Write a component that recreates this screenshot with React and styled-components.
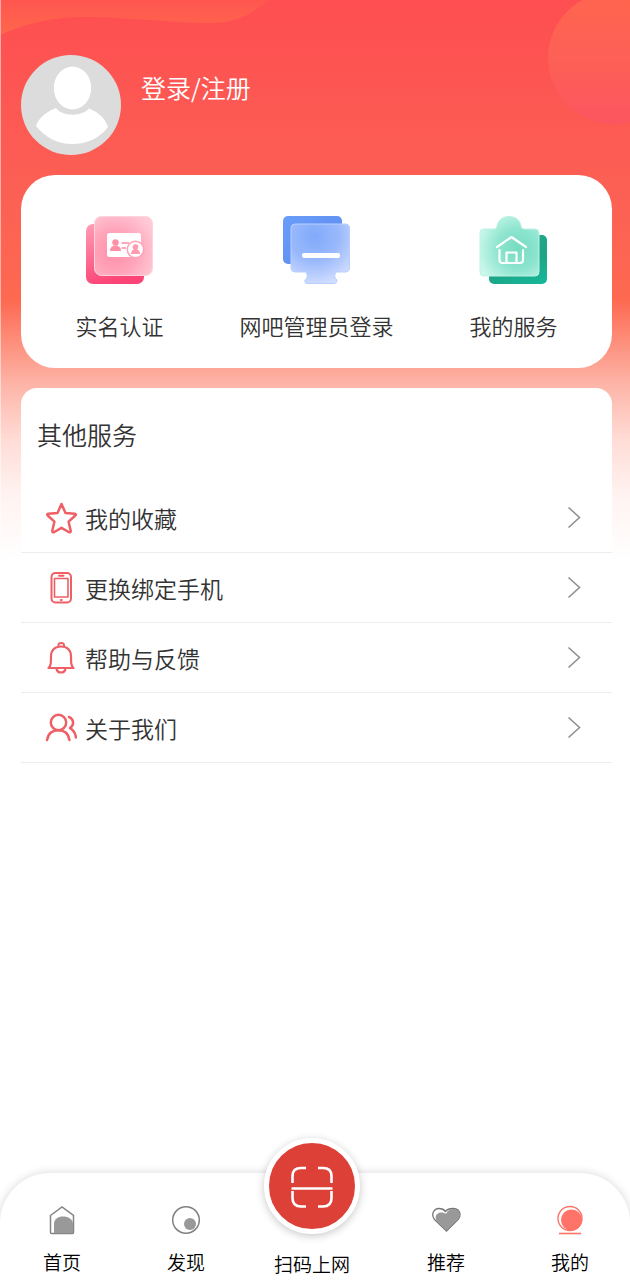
import React from 'react';
import styled, { createGlobalStyle } from 'styled-components';

const shortcuts = [
  { label: '实名认证', Icon: IdCardIcon },
  { label: '网吧管理员登录', Icon: MonitorIcon },
  { label: '我的服务', Icon: ServiceIcon },
];

const services = [
  { label: '我的收藏', Icon: StarIcon },
  { label: '更换绑定手机', Icon: PhoneIcon },
  { label: '帮助与反馈', Icon: BellIcon },
  { label: '关于我们', Icon: PeopleIcon },
];

const App = () => {
  return (
    <>
      <GlobalStyle />
      <Page>
        <Backdrop />
        <Profile>
          <Avatar />
          <LoginLink href='#login'>登录/注册</LoginLink>
        </Profile>
        <Main>
          <ShortcutCard>
            {shortcuts.map(({ label, Icon }) => (
              <Shortcut key={label} type='button'>
                <Icon />
                <span>{label}</span>
              </Shortcut>
            ))}
          </ShortcutCard>
          <ServiceCard>
            <ServiceTitle>其他服务</ServiceTitle>
            <ServiceList>
              {services.map(({ label, Icon }) => (
                <li key={label}>
                  <ServiceRow type='button'>
                    <Icon />
                    <span>{label}</span>
                    <Chevron />
                  </ServiceRow>
                </li>
              ))}
            </ServiceList>
          </ServiceCard>
        </Main>
        <TabBar>
          <Tab href='#home'>
            <HomeIcon />
            <span>首页</span>
          </Tab>
          <Tab href='#discover'>
            <DiscoverIcon />
            <span>发现</span>
          </Tab>
          <ScanTab type='button'>
            <ScanCircle>
              <ScanIcon />
            </ScanCircle>
            <span>扫码上网</span>
          </ScanTab>
          <Tab href='#recommend'>
            <HeartIcon />
            <span>推荐</span>
          </Tab>
          <Tab href='#mine' aria-current='page'>
            <MineIcon />
            <span>我的</span>
          </Tab>
        </TabBar>
      </Page>
    </>
  );
};

function Backdrop() {
  return (
    <Decoration aria-hidden='true'>
      <Wave width='272' height='36' viewBox='0 0 272 36'>
        <defs>
          <linearGradient id='wave' x1='0' y1='0' x2='0' y2='1'>
            <stop offset='0' stopColor='#ff5650' />
            <stop offset='1' stopColor='#ff674b' />
          </linearGradient>
        </defs>
        <path
          d='M0 0H270C254 11 240 23 212 23C168 23 132 17 84 17C52 17 24 24 0 35Z'
          fill='url(#wave)'
        />
      </Wave>
      <Bubble />
    </Decoration>
  );
}

function Avatar() {
  return (
    <svg width='100' height='100' viewBox='0 0 100 100' role='img' aria-label='头像'>
      <circle cx='50' cy='50' r='50' fill='#dcdcdc' />
      <ellipse cx='51.500' cy='33' rx='18.700' ry='21.500' fill='#fff' />
      <path
        d='M35 53C41 61.500 61 62 68 53.500C77 57 84 63 87 72C79 83 66 89 51 89C36 89 24 82 15 71C18 62 27 56 35 53Z'
        fill='#fff'
      />
    </svg>
  );
}

function IdCardIcon() {
  return (
    <svg width='72' height='72' viewBox='0 0 72 72' aria-hidden='true'>
      <defs>
        <linearGradient id='idBack' x1='0' y1='0' x2='0.300' y2='1'>
          <stop offset='0' stopColor='#ff9db4' />
          <stop offset='1' stopColor='#fb4577' />
        </linearGradient>
        <radialGradient id='idFront' cx='0.350' cy='0.600' r='0.750'>
          <stop offset='0' stopColor='#ff8faa' />
          <stop offset='0.500' stopColor='#ffa5ba' />
          <stop offset='1' stopColor='#ffc9d5' />
        </radialGradient>
      </defs>
      <rect x='2' y='10' width='58' height='60' rx='7' fill='url(#idBack)' />
      <rect x='10.500' y='2.500' width='58' height='59' rx='7' fill='url(#idFront)' stroke='#ffd3dd' />
      <rect x='23' y='19' width='34' height='24' rx='2.500' fill='#fff' />
      <circle cx='31.500' cy='28.500' r='3.200' fill='#ff8fa7' />
      <path d='M26 37C26 33 29 31.500 31.500 31.500C34 31.500 37 33 37 37Z' fill='#ff8fa7' />
      <path d='M37.500 29H45M37.500 34H42' stroke='#ff8fa7' strokeWidth='1.600' />
      <circle cx='51.500' cy='35.500' r='9' fill='#ffa0b5' />
      <circle cx='51.500' cy='35.500' r='7.500' fill='#fff' />
      <circle cx='51.500' cy='33' r='2.800' fill='#ff9ab0' />
      <path d='M47 40C47 36.500 49.500 35 51.500 35C53.500 35 56 36.500 56 40Z' fill='#ff9ab0' />
    </svg>
  );
}

function MonitorIcon() {
  return (
    <svg width='72' height='72' viewBox='0 0 72 72' aria-hidden='true'>
      <defs>
        <linearGradient id='pcBack' x1='0' y1='0' x2='1' y2='1'>
          <stop offset='0' stopColor='#6a9efb' />
          <stop offset='1' stopColor='#5b87ea' />
        </linearGradient>
        <radialGradient id='pcFront' cx='0.400' cy='0.200' r='0.850'>
          <stop offset='0' stopColor='#80aafb' />
          <stop offset='0.500' stopColor='#9ab9fb' />
          <stop offset='1' stopColor='#d3dfff' />
        </radialGradient>
      </defs>
      <rect x='2' y='2' width='59' height='48' rx='5' fill='url(#pcBack)' />
      <path
        d='M14 10H64Q68.500 10 68.500 14V54Q68.500 58 64 58H55Q52 63 56 66Q56 69.500 53 69.500H26Q23 69.500 24 66Q28 63 25 58H14Q10 58 10 54V14Q10 10 14 10Z'
        fill='url(#pcFront)'
        stroke='#b9ceff'
      />
      <rect x='21' y='39' width='38' height='5' rx='2' fill='#fff' />
    </svg>
  );
}

function ServiceIcon() {
  return (
    <svg width='72' height='72' viewBox='0 0 72 72' aria-hidden='true'>
      <defs>
        <linearGradient id='svBack' x1='0.500' y1='0' x2='1' y2='1'>
          <stop offset='0' stopColor='#22a88b' />
          <stop offset='0.500' stopColor='#1da486' />
          <stop offset='1' stopColor='#16b99a' />
        </linearGradient>
        <radialGradient id='svFront' cx='0.650' cy='0.550' r='0.700'>
          <stop offset='0' stopColor='#74dcc0' />
          <stop offset='0.500' stopColor='#8ee5cf' />
          <stop offset='1' stopColor='#c9f7ea' />
        </radialGradient>
      </defs>
      <rect x='11' y='21' width='58' height='49' rx='5' fill='url(#svBack)' />
      <path
        d='M6 15H16Q19 15 19 12C20 6 25 2.500 31 2.500C38 2.500 42 6 43 12Q43 15 46 15H57Q61 15 61 19V58Q61 62 57 62H6Q2 62 2 58V19Q2 15 6 15Z'
        fill='url(#svFront)'
        stroke='#bff2e3'
      />
      <g fill='none' stroke='#fff' strokeWidth='2.200' strokeLinecap='round' strokeLinejoin='round'>
        <path d='M19 33L33.500 23L48 33' />
        <path d='M21.500 36V46Q21.500 49 24.500 49H42Q45 49 45 46V36' />
        <path d='M28.500 49V38.500H38.500V49' />
      </g>
    </svg>
  );
}

function StarIcon() {
  return (
    <LineIcon viewBox='0 0 32 32' aria-hidden='true'>
      <path
        strokeWidth='2.500'
        d='M16.500 2L20.500 10.900L29.800 11.800Q31.500 12.200 30.300 13.500L23.600 19.700L25.700 28.700Q25.800 31 23.700 30L16.500 25.800L9.300 30Q7.200 31 7.300 28.700L9.400 19.700L2.700 13.500Q1.500 12.200 3.200 11.800L12.500 10.900Z'
      />
    </LineIcon>
  );
}

function PhoneIcon() {
  return (
    <LineIcon viewBox='0 0 32 32' aria-hidden='true'>
      <rect x='6.500' y='1' width='19.500' height='29.500' rx='4' strokeWidth='2' />
      <rect x='9.500' y='6.500' width='13.500' height='18.500' strokeWidth='1.600' />
      <path d='M14 3.800H18.500M15.800 28H16.700' strokeWidth='2' />
    </LineIcon>
  );
}

function BellIcon() {
  return (
    <LineIcon viewBox='0 0 32 32' aria-hidden='true'>
      <path d='M13.500 4.500V3Q13.500 1 16.200 1T19 3V4.500' strokeWidth='2' />
      <path d='M3.500 26C6 23.500 6 21 6 14.500C6 8 10 4.500 16 4.500S26 8 26 14.500C26 21 26 23.500 28.500 26Z' strokeWidth='2.200' />
      <path d='M11.500 26.500Q12 30.500 16 30.500T20.500 26.500' strokeWidth='2.200' />
    </LineIcon>
  );
}

function PeopleIcon() {
  return (
    <LineIcon viewBox='0 0 32 32' aria-hidden='true'>
      <circle cx='13.500' cy='10.500' r='7.700' strokeWidth='2.500' />
      <path d='M2 28C3 22 6.500 18.200 13.500 18.200S23.500 22 24.500 28' strokeWidth='2.500' />
      <path d='M24 5C29.500 7.500 29 13.500 25 16C28 18 30.500 21.500 31 25.500' strokeWidth='2.500' />
    </LineIcon>
  );
}

function Chevron() {
  return (
    <svg width='14' height='24' viewBox='0 0 14 24' fill='none' stroke='#909090' strokeWidth='1.600' aria-hidden='true'>
      <path d='M1.500 1.500L12.500 11.500L1.500 21.500' />
    </svg>
  );
}

function HomeIcon() {
  return (
    <TabIcon viewBox='0 0 30 30' aria-hidden='true'>
      <path d='M3.500 10.500L15 2L26.500 10.500V27.500Q26.500 28.500 25.500 28.500H4.500Q3.500 28.500 3.500 27.500Z' fill='none' stroke='#858585' strokeWidth='1.500' />
      <path d='M7 28V19C7 14 11 11.500 16 11.500S26 14 26 19V28Z' fill='#999' />
    </TabIcon>
  );
}

function DiscoverIcon() {
  return (
    <TabIcon viewBox='0 0 30 30' aria-hidden='true'>
      <circle cx='15' cy='15' r='13.300' fill='none' stroke='#808080' strokeWidth='1.500' />
      <circle cx='19' cy='19' r='6' fill='#999' />
    </TabIcon>
  );
}

function HeartIcon() {
  return (
    <TabIcon viewBox='0 0 30 30' aria-hidden='true'>
      <path d='M15.500 26L3.500 14.500C-0.500 9 3 3.500 8 3.500C11 3.500 13 4.500 14.500 6.500C16 4.500 18.500 3.500 22 3.500C28 3.500 31 9 27.500 14Z' fill='#fff' stroke='#777' strokeWidth='1.300' />
      <path d='M15.500 25.500L6 16.500C3 12.500 5.500 7.500 10 7.500C12 7.500 14 8 15 9C16.500 5.500 19 4 22 4C27.500 4 30.500 9 27 14Z' fill='#999' />
    </TabIcon>
  );
}

function MineIcon() {
  return (
    <TabIcon viewBox='0 0 30 30' aria-hidden='true'>
      <circle cx='15' cy='13.500' r='12' fill='none' stroke='#ff7368' strokeWidth='1.400' />
      <circle cx='16.500' cy='15' r='10.500' fill='#ff7368' />
      <path d='M4 28.500H26' stroke='#ff7368' strokeWidth='1.600' />
    </TabIcon>
  );
}

function ScanIcon() {
  return (
    <svg width='44' height='44' viewBox='0 0 44 44' fill='none' stroke='#fff' strokeWidth='2.600' aria-hidden='true'>
      <path d='M2.500 19V12Q2.500 4 11 4H16M28 4H33Q41.500 4 41.500 12V19M2.500 27V34Q2.500 42.500 11 42.500H16M28 42.500H33Q41.500 42.500 41.500 34V27' />
      <path d='M1.500 24.500H42.500' />
    </svg>
  );
}

const GlobalStyle = createGlobalStyle`
  * {
    box-sizing: border-box;
  }
  body {
    margin: 0;
    background: #fff;
    font-family: 'Noto Sans CJK SC', sans-serif;
    font-weight: 350;
    color: #333;
  }
  button {
    padding: 0;
    border: 0;
    background: none;
    color: inherit;
    font: inherit;
    cursor: pointer;
  }
  a {
    color: inherit;
    text-decoration: none;
  }
  svg {
    display: block;
    flex: none;
  }
`;

const Page = styled.div`
  position: relative;
  isolation: isolate;
  display: flex;
  flex-direction: column;
  min-height: 100vh;
`;

const Decoration = styled.div`
  position: absolute;
  inset: 0 0 auto;
  z-index: -1;
  height: 560px;
  overflow: hidden;
  background: linear-gradient(
    #fe4e51 0,
    #fc5f54 180px,
    #fd6951 300px,
    #fd9482 348px,
    #fdb5a8 385px,
    #ffdcd6 440px,
    #fff3f1 495px,
    #fff 560px
  );
  border-left: 1px solid rgba(255, 255, 255, 0.5);
`;

const Wave = styled.svg`
  position: absolute;
  top: 0;
  left: -1px;
`;

const Bubble = styled.div`
  position: absolute;
  top: -8px;
  right: -50px;
  width: 132px;
  height: 132px;
  border-radius: 50%;
  background: linear-gradient(#ff654e, #fd6056 50%, #fc5560);
`;

const Profile = styled.header`
  display: flex;
  gap: 20px;
  padding: 55px 21px 20px;
`;

const LoginLink = styled.a`
  align-self: flex-start;
  margin-top: 14px;
  color: #fff;
  font-size: 25px;
  line-height: 36px;
`;

const Main = styled.main`
  display: flex;
  flex-direction: column;
  gap: 20px;
  padding: 0 18px 0 21px;
`;

const ShortcutCard = styled.section`
  display: grid;
  grid-template-columns: repeat(3, 1fr);
  padding: 39px 0 26px;
  border-radius: 34px;
  background: #fff;
`;

const Shortcut = styled.button`
  display: flex;
  flex-direction: column;
  align-items: center;
  gap: 22px;
  font-size: 22px;
  line-height: 34px;
  white-space: nowrap;
`;

const ServiceCard = styled.section`
  border-radius: 16px;
  background: #fff;
`;

const ServiceTitle = styled.h2`
  margin: 0;
  padding: 28px 16px 31px;
  font-size: 25px;
  font-weight: inherit;
  line-height: 36px;
`;

const ServiceList = styled.ul`
  margin: 0;
  padding: 0;
  list-style: none;
`;

const ServiceRow = styled.button`
  display: flex;
  align-items: center;
  gap: 8px;
  width: 100%;
  height: 70px;
  padding: 0 31px 0 24px;
  border-bottom: 1px solid #ededed;
  font-size: 23px;
  span {
    flex: 1;
    text-align: left;
  }
`;

const LineIcon = styled.svg`
  width: 32px;
  height: 32px;
  fill: none;
  stroke: #ee6065;
  stroke-linecap: round;
  stroke-linejoin: round;
`;

const TabBar = styled.nav`
  display: grid;
  grid-template-columns: 31fr 31fr 32fr 35fr 27fr;
  margin-top: auto;
  padding-right: 6px;
  height: 107px;
  border-radius: 50px 50px 0 0;
  background: #fff;
  box-shadow: 0 0 10px rgba(0, 0, 0, 0.16);
  color: #000;
  font-size: 19px;
  line-height: 28px;
`;

const Tab = styled.a`
  display: flex;
  flex-direction: column;
  align-items: center;
  gap: 13px;
  padding-top: 32px;
`;

const TabIcon = styled.svg`
  width: 30px;
  height: 30px;
`;

const ScanTab = styled.button`
  display: flex;
  flex-direction: column;
  align-items: center;
  gap: 16px;
  height: 107px;
`;

/* the round button rises above the bar's top edge */
const ScanCircle = styled.span`
  display: grid;
  place-items: center;
  flex: none;
  width: 96px;
  height: 96px;
  margin-top: -35px;
  border: 5px solid #fff;
  border-radius: 50%;
  background: #dd4037;
  box-shadow: 0 2px 8px rgba(0, 0, 0, 0.22);
`;

export default App;
